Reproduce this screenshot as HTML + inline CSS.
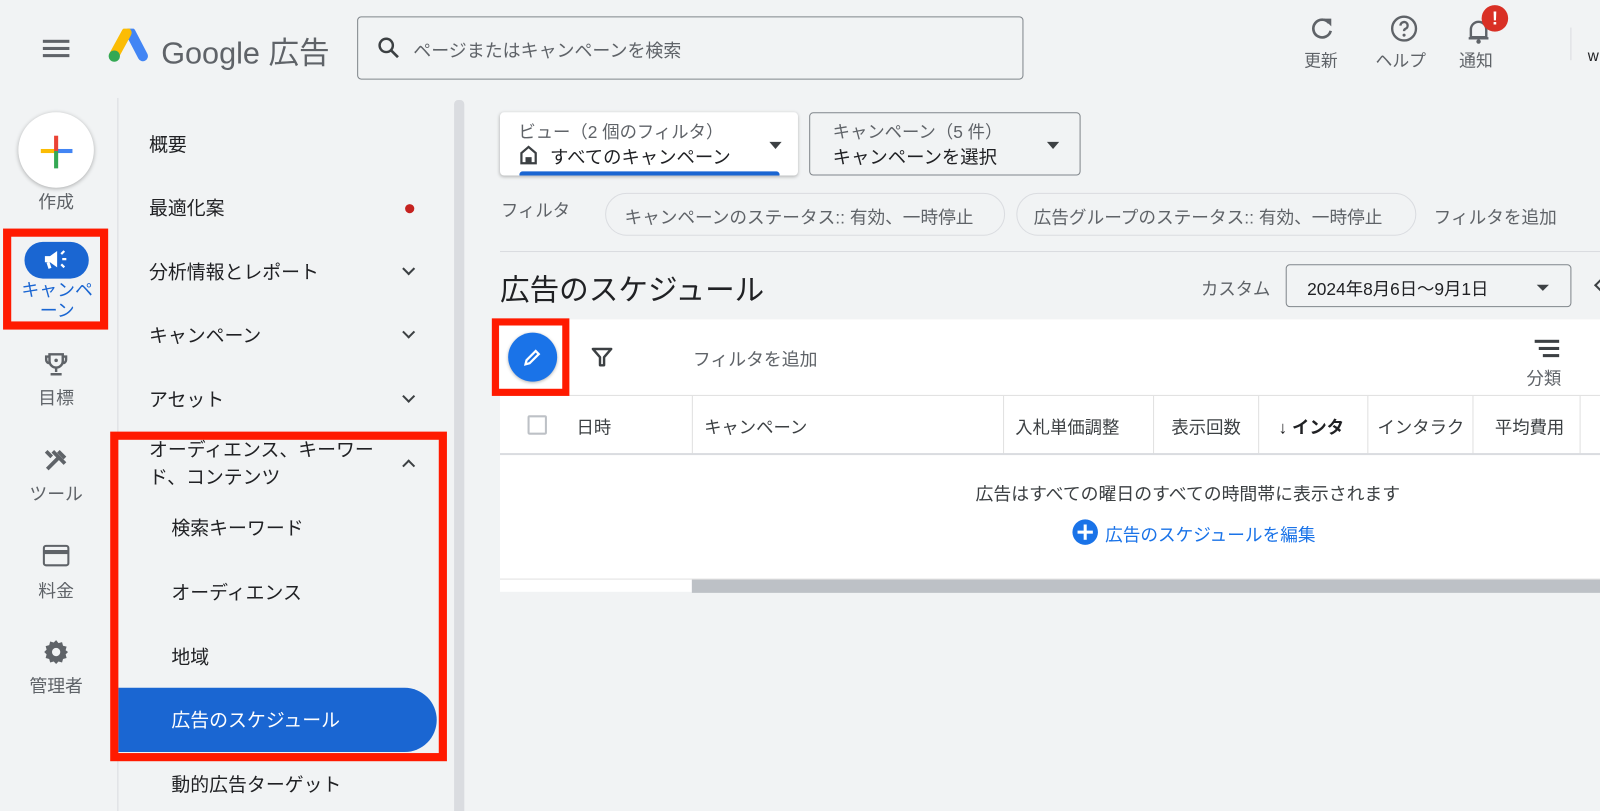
<!DOCTYPE html>
<html><head><meta charset="utf-8"><style>
*{box-sizing:border-box;margin:0;padding:0}
html,body{width:1600px;height:811px;overflow:hidden;background:#f1f3f4}
body{font-family:"Liberation Sans","Noto Sans CJK JP",sans-serif;color:#3c4043;position:relative}
#w{position:absolute;left:0;top:0;width:1568px;height:795px;transform:scale(1.0204);transform-origin:0 0}
.a{position:absolute}
.t{position:absolute;white-space:nowrap}
.nav{font-size:18.5px;color:#202124}
.rail{font-size:17.5px;color:#5f6368;width:110px;text-align:center;left:0}
.chev{position:absolute;width:9px;height:9px;border-right:2px solid #3c4043;border-bottom:2px solid #3c4043;transform:rotate(45deg)}
.vd{position:absolute;top:388px;width:1px;height:57px;background:#e0e0e0}
.th{position:absolute;top:405px;font-size:17px;color:#3c4043;white-space:nowrap;overflow:hidden}
</style></head><body><div id="w">
<!-- header -->
<div class="a" style="left:42px;top:39px;width:26px;height:3px;background:#5f6368;box-shadow:0 7px 0 #5f6368,0 14px 0 #5f6368"></div>
<svg class="a" style="left:103px;top:28px" width="42" height="36" viewBox="0 0 42 36"><path d="M25 4 L37 27" stroke="#4285f4" stroke-width="10" stroke-linecap="round"/><path d="M21 4 L9 26" stroke="#fbbc04" stroke-width="10" stroke-linecap="round"/><circle cx="9" cy="27" r="5.5" fill="#34a853"/></svg>
<div class="t" style="left:158px;top:27px;font-size:30px;color:#5f6368">Google 広告</div>
<div class="a" style="left:350px;top:16px;width:653px;height:62px;border:1px solid #80868b;border-radius:4px"></div>
<svg class="a" style="left:369px;top:35px" width="24" height="24" viewBox="0 0 24 24"><circle cx="9.5" cy="9.5" r="6.5" fill="none" stroke="#3c4043" stroke-width="2.4"/><path d="M14.5 14.5 L21 21" stroke="#3c4043" stroke-width="2.6"/></svg>
<div class="t" style="left:405px;top:37px;font-size:17.6px;color:#5f6368">ページまたはキャンペーンを検索</div>
<svg class="a" style="left:1283px;top:15px" width="26" height="26" viewBox="0 0 24 24"><path d="M18 7 A8 8 0 1 0 19.5 14" fill="none" stroke="#5f6368" stroke-width="2.4"/><path d="M13 3 H20 V10 Z" fill="#5f6368"/></svg>
<div class="t" style="left:1278px;top:46px;font-size:16.5px;color:#5f6368">更新</div>
<svg class="a" style="left:1362px;top:14px" width="28" height="28" viewBox="0 0 24 24"><circle cx="12" cy="12" r="10" fill="none" stroke="#5f6368" stroke-width="2"/><path d="M9 9.5a3 3 0 1 1 4 2.8c-.8.4-1 1-1 1.8" fill="none" stroke="#5f6368" stroke-width="2"/><circle cx="12" cy="17.5" r="1.3" fill="#5f6368"/></svg>
<div class="t" style="left:1348px;top:46px;font-size:16.5px;color:#5f6368">ヘルプ</div>
<svg class="a" style="left:1436px;top:16px" width="26" height="28" viewBox="0 0 24 26"><path d="M5 19 V12 a7 7 0 0 1 14 0 V19 Z" fill="none" stroke="#5f6368" stroke-width="2.2"/><path d="M3 20 H21" stroke="#5f6368" stroke-width="2.2"/><circle cx="12" cy="23" r="2" fill="#5f6368"/></svg>
<div class="a" style="left:1452px;top:5px;width:26px;height:26px;border-radius:50%;background:#d93025;color:#fff;font-weight:bold;font-size:18px;text-align:center;line-height:26px">!</div>
<div class="t" style="left:1430px;top:46px;font-size:16.5px;color:#5f6368">通知</div>
<div class="a" style="left:1539px;top:27px;width:1px;height:32px;background:#dadce0"></div>
<div class="t" style="left:1556px;top:47px;font-size:15px;color:#202124">w</div>
<!-- rail -->
<div class="a" style="left:18px;top:110px;width:74px;height:74px;border-radius:50%;background:#fff;box-shadow:0 1px 4px rgba(0,0,0,.3)"></div>
<div class="a" style="left:40px;top:146px;width:15px;height:4px;background:#fbbc04"></div>
<div class="a" style="left:55px;top:146px;width:16px;height:4px;background:#4285f4"></div>
<div class="a" style="left:53px;top:133px;width:4px;height:15px;background:#ea4335"></div>
<div class="a" style="left:53px;top:148px;width:4px;height:17px;background:#34a853"></div>
<div class="t rail" style="top:185px">作成</div>
<div class="a" style="left:3px;top:224px;width:103px;height:99px;border:8px solid #ff1a00"></div>
<div class="a" style="left:24px;top:237px;width:63px;height:36px;border-radius:18px;background:#1a66d2"></div>
<svg class="a" style="left:41px;top:243px" width="28" height="24" viewBox="0 0 28 24"><path d="M3 8 H8 L15 3 V19 L8 14 H3 Z" fill="#fff"/><path d="M6 14 L8 20" stroke="#fff" stroke-width="3"/><path d="M19 6 L22 3 M20 11 H24 M19 16 L22 19" stroke="#fff" stroke-width="2.2"/></svg>
<div class="t rail" style="top:274px;color:#1a66d2;line-height:20px;white-space:normal;left:12px;width:88px">キャンペ<br>ーン</div>
<svg class="a" style="left:42px;top:344px" width="26" height="26" viewBox="0 0 24 24"><path d="M6 3 H18 V9 a6 6 0 0 1 -12 0 Z M6 5 H3 V8 a3 3 0 0 0 3 3 M18 5 H21 V8 a3 3 0 0 1 -3 3 M12 15 V19 M7 21 H17" fill="none" stroke="#5f6368" stroke-width="2.2"/><circle cx="12" cy="8.5" r="1.6" fill="#5f6368"/></svg>
<div class="t rail" style="top:377px">目標</div>
<svg class="a" style="left:42px;top:438px" width="26" height="26" viewBox="0 0 24 24"><path d="M4 20 L15 9 M9 4 L20 15 M14 4 L20 10 M3 4 L8 9" stroke="#5f6368" stroke-width="3.4" fill="none"/></svg>
<div class="t rail" style="top:471px">ツール</div>
<div class="a" style="left:42px;top:534px;width:26px;height:21px;border:2.5px solid #5f6368;border-radius:3px"></div>
<div class="a" style="left:43px;top:539px;width:24px;height:4px;background:#5f6368"></div>
<div class="t rail" style="top:566px">料金</div>
<svg class="a" style="left:41px;top:625px" width="28" height="28" viewBox="0 0 24 24"><path d="M12 2l2 2.5 3-.8.8 3 3 .8-.8 3L22 12l-2 2 .8 3-3 .8-.8 3-3-.8L12 22l-2-2-3 .8-.8-3-3-.8.8-3L2 12l2-2-.8-3 3-.8.8-3 3 .8Z" fill="#5f6368"/><circle cx="12" cy="12" r="3.5" fill="#f1f3f4"/></svg>
<div class="t rail" style="top:659px">管理者</div>
<div class="a" style="left:115px;top:96px;width:1px;height:715px;background:#dadce0"></div>
<!-- nav -->
<div class="t nav" style="left:146px;top:128px">概要</div>
<div class="t nav" style="left:146px;top:190px">最適化案</div>
<div class="a" style="left:397px;top:200px;width:9px;height:9px;border-radius:50%;background:#c5221f"></div>
<div class="t nav" style="left:146px;top:253px">分析情報とレポート</div><div class="chev" style="left:396px;top:259px"></div>
<div class="t nav" style="left:146px;top:315px">キャンペーン</div><div class="chev" style="left:396px;top:321px"></div>
<div class="t nav" style="left:146px;top:378px">アセット</div><div class="chev" style="left:396px;top:384px"></div>
<div class="t nav" style="left:146px;top:427px;line-height:27px">オーディエンス、キーワー<br>ド、コンテンツ</div><div class="chev" style="left:396px;top:452px;transform:rotate(225deg)"></div>
<div class="t nav" style="left:168px;top:504px">検索キーワード</div>
<div class="t nav" style="left:168px;top:567px">オーディエンス</div>
<div class="t nav" style="left:168px;top:630px">地域</div>
<div class="a" style="left:116px;top:674px;width:312px;height:63px;background:#1a66d2;border-radius:0 32px 32px 0"></div>
<div class="t nav" style="left:168px;top:692px;color:#fff">広告のスケジュール</div>
<div class="a" style="left:108px;top:423px;width:330px;height:323px;border:8px solid #ff1a00"></div>
<div class="t nav" style="left:168px;top:755px">動的広告ターゲット</div>
<div class="a" style="left:445px;top:98px;width:10px;height:713px;background:#dadce0;border-radius:4px"></div>
<!-- main -->
<div class="a" style="left:490px;top:110px;width:292px;height:62px;background:#fff;border-radius:4px;box-shadow:0 1px 3px rgba(0,0,0,.25);overflow:hidden"><div class="a" style="left:19px;top:58px;width:255px;height:6px;background:#1a66d2;border-radius:3px"></div></div>
<div class="t" style="left:508px;top:115px;font-size:17px;color:#5f6368">ビュー（2 個のフィルタ）</div>
<svg class="a" style="left:509px;top:142px" width="18" height="20" viewBox="0 0 18 20"><path d="M2 8 L9 2 L16 8 V18 H2 Z" fill="none" stroke="#3c4043" stroke-width="2.2"/><rect x="6" y="12" width="6" height="6" fill="#3c4043"/></svg>
<div class="t" style="left:539px;top:140px;font-size:18px;color:#202124">すべてのキャンペーン</div>
<div class="a" style="left:754px;top:139px;border:6px solid transparent;border-top:7px solid #3c4043"></div>
<div class="a" style="left:793px;top:110px;width:266px;height:62px;border:1px solid #80868b;border-radius:4px"></div>
<div class="t" style="left:816px;top:115px;font-size:17px;color:#5f6368">キャンペーン（5 件）</div>
<div class="t" style="left:816px;top:140px;font-size:18px;color:#202124">キャンペーンを選択</div>
<div class="a" style="left:1026px;top:139px;border:6px solid transparent;border-top:7px solid #3c4043"></div>
<div class="t" style="left:491px;top:192px;font-size:17px;color:#5f6368">フィルタ</div>
<div class="a" style="left:593px;top:189px;width:392px;height:42px;border:1px solid #dadce0;border-radius:21px"></div>
<div class="t" style="left:612px;top:199px;font-size:17.3px;color:#5f6368">キャンペーンのステータス:: 有効、一時停止</div>
<div class="a" style="left:996px;top:189px;width:392px;height:42px;border:1px solid #dadce0;border-radius:21px"></div>
<div class="t" style="left:1013px;top:199px;font-size:17.3px;color:#5f6368">広告グループのステータス:: 有効、一時停止</div>
<div class="t" style="left:1405px;top:199px;font-size:17.3px;color:#5f6368">フィルタを追加</div>
<div class="a" style="left:490px;top:246px;width:1110px;height:1px;background:#dadce0"></div>
<div class="t" style="left:490px;top:261px;font-size:29px;color:#202124">広告のスケジュール</div>
<div class="t" style="left:1177px;top:269px;font-size:17px;color:#5f6368">カスタム</div>
<div class="a" style="left:1260px;top:259px;width:280px;height:42px;border:1px solid #80868b;border-radius:4px"></div>
<div class="t" style="left:1281px;top:269px;font-size:17px;color:#202124">2024年8月6日〜9月1日</div>
<div class="a" style="left:1506px;top:279px;border:6px solid transparent;border-top:6px solid #3c4043"></div>
<div class="chev" style="left:1564px;top:275px;transform:rotate(135deg)"></div>
<!-- table -->
<div class="a" style="left:490px;top:313px;width:1110px;height:267px;background:#fff"></div>
<div class="a" style="left:490px;top:387px;width:1110px;height:1px;background:#e0e0e0"></div>
<div class="a" style="left:498px;top:326px;width:48px;height:48px;border-radius:50%;background:#1a73e8;box-shadow:0 1px 3px rgba(0,0,0,.3)"></div>
<svg class="a" style="left:512px;top:340px" width="20" height="20" viewBox="0 0 20 20"><path d="M3 17 L4 13 L13 4 L16 7 L7 16 Z" fill="none" stroke="#fff" stroke-width="2.2"/></svg>
<div class="a" style="left:482px;top:312px;width:76px;height:76px;border:7px solid #ff1a00"></div>
<svg class="a" style="left:579px;top:339px" width="22" height="22" viewBox="0 0 22 22"><path d="M2 3 H20 L13 11 V19 H9 V11 Z" fill="none" stroke="#3c4043" stroke-width="2.4" stroke-linejoin="round"/></svg>
<div class="t" style="left:679px;top:339px;font-size:17.5px;color:#5f6368">フィルタを追加</div>
<div class="a" style="left:1504px;top:333px;width:24px;height:2.5px;background:#3c4043"></div>
<div class="a" style="left:1508px;top:340px;width:20px;height:2.5px;background:#3c4043"></div>
<div class="a" style="left:1512px;top:347px;width:16px;height:2.5px;background:#3c4043"></div>
<div class="t" style="left:1496px;top:357px;font-size:17px;color:#5f6368">分類</div>
<div class="a" style="left:517px;top:407px;width:19px;height:19px;border:2px solid #bdc1c6;border-radius:2px"></div>
<div class="th" style="left:565px">日時</div>
<div class="vd" style="left:678px"></div><div class="th" style="left:690px">キャンペーン</div>
<div class="vd" style="left:983px"></div><div class="th" style="left:995px;width:108px">入札単価調整</div>
<div class="vd" style="left:1130px"></div><div class="th" style="left:1148px">表示回数</div>
<div class="vd" style="left:1233px"></div><div class="th" style="left:1253px;color:#202124;font-weight:bold">↓ インタ</div>
<div class="vd" style="left:1340px"></div><div class="th" style="left:1350px;width:84px">インタラクション</div>
<div class="vd" style="left:1443px"></div><div class="th" style="left:1465px">平均費用</div>
<div class="vd" style="left:1548px"></div>
<div class="a" style="left:490px;top:444px;width:1110px;height:2px;background:#dadce0"></div>
<div class="t" style="left:956px;top:471px;font-size:17.5px;color:#3c4043">広告はすべての曜日のすべての時間帯に表示されます</div>
<div class="a" style="left:1051px;top:509px;width:25px;height:25px;border-radius:50%;background:#1a73e8"></div>
<div class="a" style="left:1056px;top:520px;width:15px;height:3px;background:#fff"></div>
<div class="a" style="left:1062px;top:514px;width:3px;height:15px;background:#fff"></div>
<div class="t" style="left:1083px;top:510px;font-size:17.3px;color:#1a73e8">広告のスケジュールを編集</div>
<div class="a" style="left:490px;top:567px;width:1110px;height:1px;background:#e0e0e0"></div>
<div class="a" style="left:678px;top:568px;width:922px;height:13px;background:#bdc1c6"></div>
</div></body></html>
